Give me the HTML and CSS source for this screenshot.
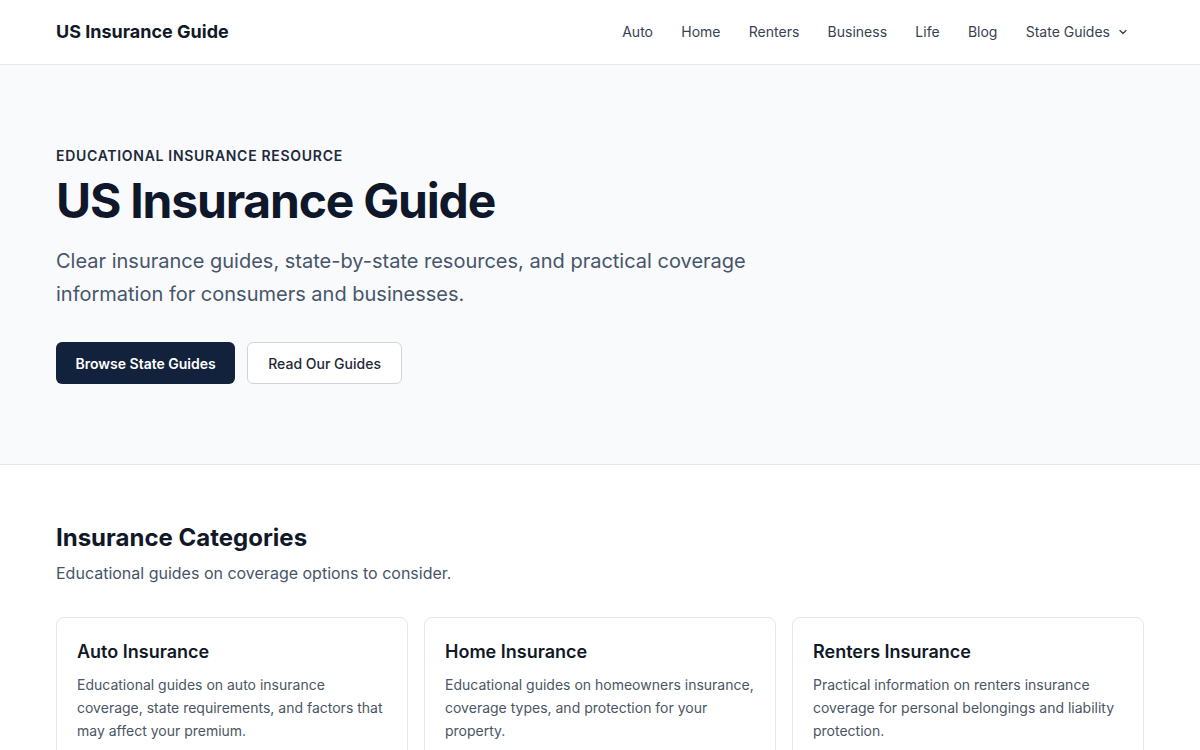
FILE: index.html
```html
<!DOCTYPE html>
<html lang="en">
<head>
<meta charset="utf-8">
<title>US Insurance Guide</title>
<link rel="stylesheet" href="styles.css">
</head>
<body>
<header class="site-header">
  <div class="container header-inner">
    <a class="logo" href="#">US Insurance Guide</a>
    <nav class="nav">
      <a href="#">Auto</a>
      <a href="#">Home</a>
      <a href="#">Renters</a>
      <a href="#">Business</a>
      <a href="#">Life</a>
      <a href="#">Blog</a>
      <a href="#" class="dropdown">State Guides
        <svg width="12" height="12" viewBox="0 0 24 24" fill="none" stroke="currentColor" stroke-width="2.5" stroke-linecap="round" stroke-linejoin="round"><path d="M6 9l6 6 6-6"/></svg>
      </a>
    </nav>
  </div>
</header>
<section class="hero">
  <div class="container">
    <p class="eyebrow">EDUCATIONAL INSURANCE RESOURCE</p>
    <h1 class="hero-title">US Insurance Guide</h1>
    <p class="hero-text">Clear insurance guides, state-by-state resources, and practical coverage information for consumers and businesses.</p>
    <div class="hero-actions">
      <a class="btn btn-primary" href="#">Browse State Guides</a>
      <a class="btn btn-secondary" href="#">Read Our Guides</a>
    </div>
  </div>
</section>
<section class="categories">
  <div class="container">
    <h2 class="section-title">Insurance Categories</h2>
    <p class="section-sub">Educational guides on coverage options to consider.</p>
    <div class="card-grid">
      <div class="card">
        <h3 class="card-title">Auto Insurance</h3>
        <p class="card-text">Educational guides on auto insurance coverage, state requirements, and factors that may affect your premium.</p>
      </div>
      <div class="card">
        <h3 class="card-title">Home Insurance</h3>
        <p class="card-text">Educational guides on homeowners insurance, coverage types, and protection for your property.</p>
      </div>
      <div class="card">
        <h3 class="card-title">Renters Insurance</h3>
        <p class="card-text">Practical information on renters insurance coverage for personal belongings and liability protection.</p>
      </div>
    </div>
  </div>
</section>
</body>
</html>
```
FILE: styles.css
```css
* { box-sizing: border-box; }
html, body { margin: 0; padding: 0; }
body {
  font-family: Inter, "Noto Sans", sans-serif;
  color: #0f172a;
  background: #ffffff;
}
a { text-decoration: none; color: inherit; }
.container {
  max-width: 1088px;
  margin: 0 auto;
}
.site-header {
  height: 65px;
  border-bottom: 1px solid #e5e7eb;
  background: #fff;
}
.header-inner {
  height: 63px;
  display: flex;
  align-items: center;
  justify-content: space-between;
}
.logo {
  font-size: 18px;
  font-weight: 700;
  color: #111827;
}
.nav {
  display: flex;
  align-items: center;
  gap: 28.3px;
  padding-right: 15px;
}
.nav a {
  font-size: 14px;
  color: #374151;
  font-weight: 400;
}
.dropdown {
  display: flex;
  align-items: center;
  gap: 7px;
}
.hero {
  background: #f8fafc;
  border-bottom: 1px solid #e5e7eb;
  padding: 81px 0 80px;
}
.eyebrow {
  margin: 0;
  font-size: 14px;
  font-weight: 600;
  letter-spacing: 0.7px;
  color: #1e293b;
  line-height: 20px;
}
.hero-title {
  margin: 7px 0 0;
  font-size: 48px;
  font-weight: 700;
  line-height: 56px;
  letter-spacing: -1.2px;
  color: #0f172a;
}
.hero-text {
  margin: 16px 0 0;
  max-width: 720px;
  font-size: 20px;
  line-height: 33px;
  color: #475569;
}
.hero-actions {
  display: flex;
  gap: 12px;
  margin-top: 31px;
}
.btn {
  display: inline-flex;
  align-items: center;
  height: 42px;
  padding: 0 20px;
  border-radius: 6px;
  font-size: 14px;
  font-weight: 500;
}
.btn-primary {
  background: #13223c;
  color: #fff;
  font-weight: 600;
  padding: 0 19.5px;
}
.btn-secondary {
  background: #fff;
  color: #1f2937;
  border: 1px solid #d1d5db;
}
.categories {
  padding: 57px 0 40px;
}
.section-title {
  margin: 0;
  font-size: 24px;
  font-weight: 700;
  line-height: 32px;
  color: #111827;
}
.section-sub {
  margin: 7px 0 0;
  font-size: 16px;
  line-height: 24px;
  color: #475569;
}
.card-grid {
  margin-top: 32px;
  display: grid;
  grid-template-columns: repeat(3, 1fr);
  gap: 16px;
}
.card {
  border: 1px solid #e5e7eb;
  border-radius: 8px;
  padding: 21px 20px 20px;
  background: #fff;
}
.card-title {
  margin: 0;
  font-size: 18px;
  font-weight: 600;
  line-height: 26px;
  color: #111827;
}
.card-text {
  margin: 8px 0 0;
  font-size: 14px;
  line-height: 23px;
  color: #4b5563;
}
```
